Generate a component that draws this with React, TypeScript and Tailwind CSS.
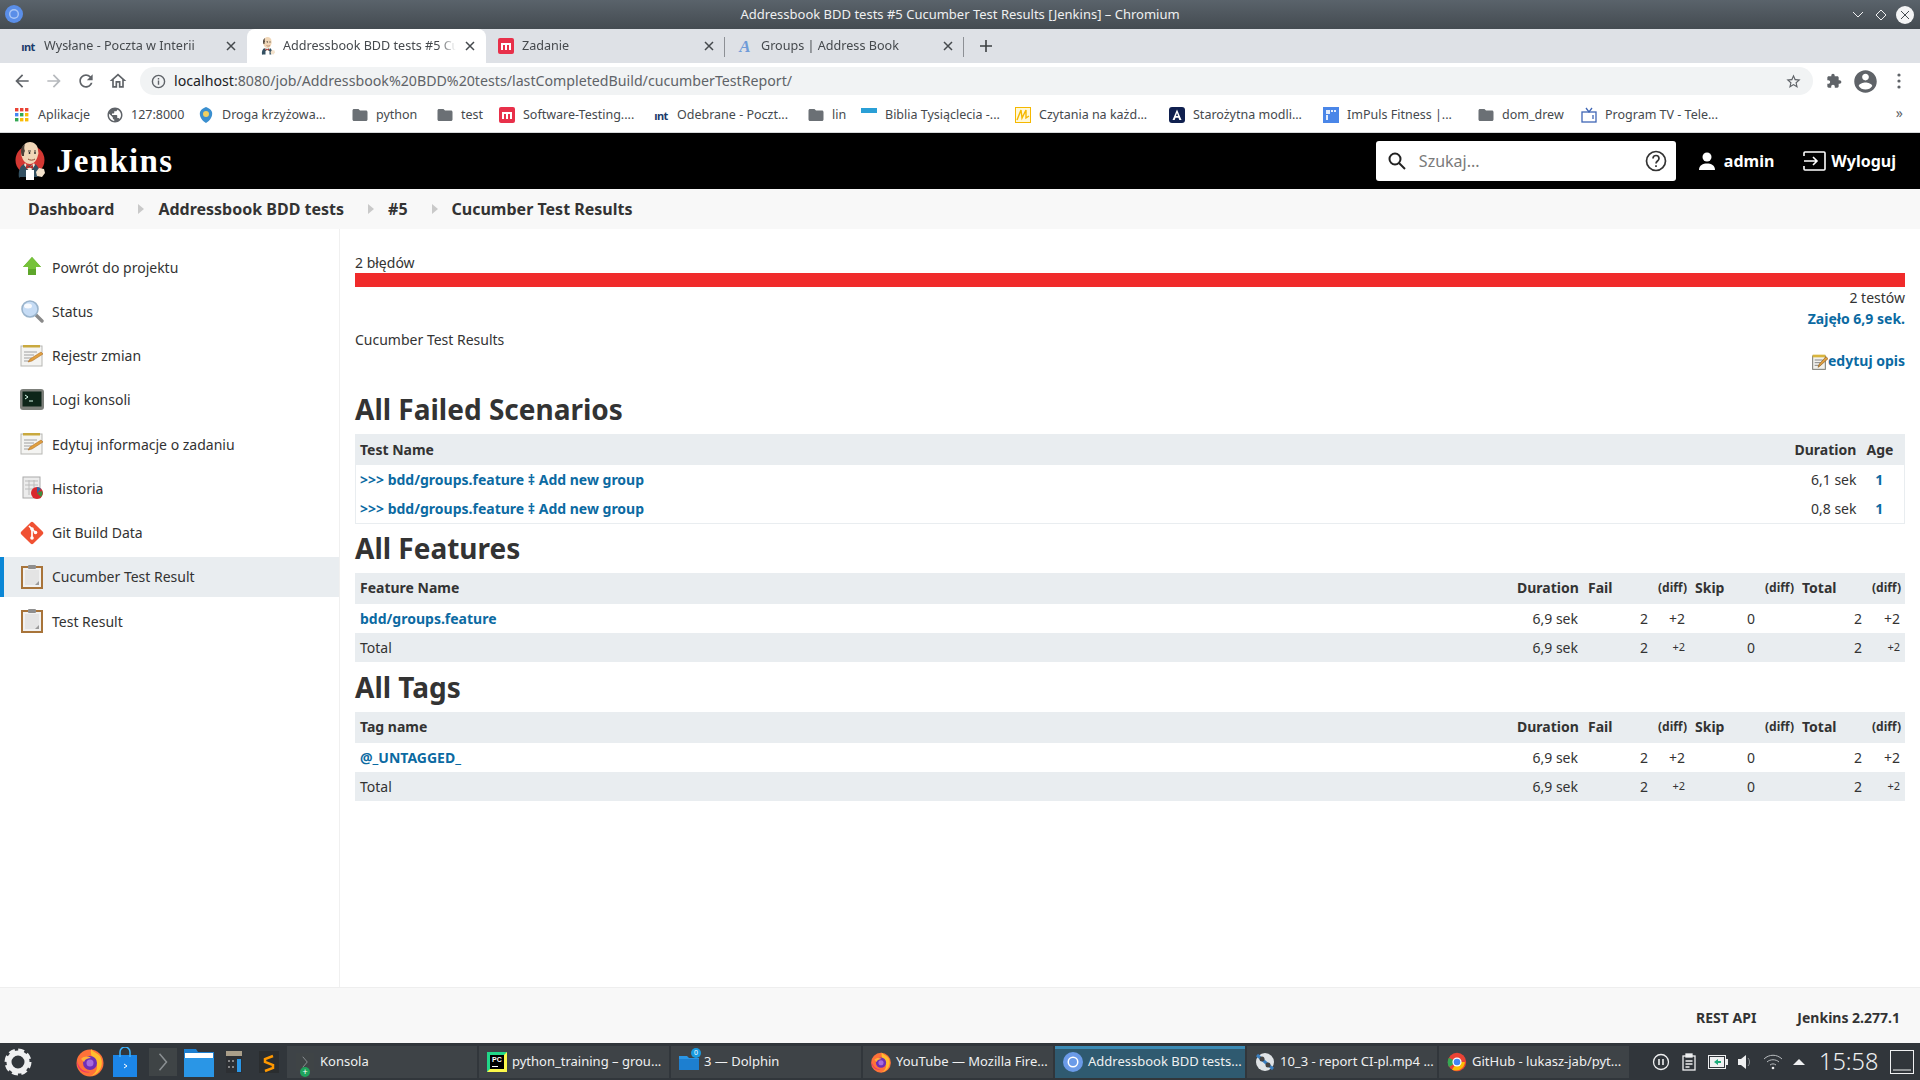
import React from "react";

const P = ({ d, c = "", s = 16, fill = "currentColor" }: { d: string; c?: string; s?: number; fill?: string }) => (
  <svg width={s} height={s} viewBox="0 0 24 24" className={"shrink-0 " + c} fill={fill}><path d={d} /></svg>
);
const FOLDER = "M10 4H4c-1.1 0-1.99.9-1.99 2L2 18c0 1.1.9 2 2 2h16c1.1 0 2-.9 2-2V8c0-1.1-.9-2-2-2h-8l-2-2z";
const GLOBE = "M12 2C6.48 2 2 6.48 2 12s4.48 10 10 10 10-4.48 10-10S17.52 2 12 2zm-1 17.93c-3.95-.49-7-3.85-7-7.93 0-.62.08-1.21.21-1.79L9 15v1c0 1.1.9 2 2 2v1.93zm6.9-2.54c-.26-.81-1-1.39-1.9-1.39h-1v-3c0-.55-.45-1-1-1H8v-2h2c.55 0 1-.45 1-1V7h2c1.1 0 2-.9 2-2v-.41c2.93 1.19 5 4.06 5 7.41 0 2.08-.8 3.97-2.1 5.39z";

const Jenkins = ({ w = 30, h = 38, ring = true }: { w?: number; h?: number; ring?: boolean }) => (
  <svg width={w} height={h} viewBox="0 0 30 38" className="shrink-0">
    {ring && <circle cx="15" cy="18" r="14.500" fill="#d33833" />}
    <path d="M4 36c-1-7 1-12 5-14l5 2 6-2c3 2 5 6 5 10l-3 3H5z" fill="#335061" />
    <path d="M10 21l4 5 5-5 1 2-5 7-6-7z" fill="#f3ead8" />
    <path d="M11 23l3.500 2 3.500-2v4l-3.500-1.500L11 27z" fill="#b5302c" />
    <path d="M7 9C7 3 11 0 15 0s8 3 8 8c0 2 1 3 0 5-1 5-4 9-8 9-4 0-7-3-8-7-1-1-1-4 0-6z" fill="#f0d6b7" />
    <path d="M7 14C5 9 6 4 10 2c-1 3-1 5 0 7-1 1-1 3-1 5z" fill="#4a4038" />
    <path d="M13 9h3M19 9h2" stroke="#4a4038" strokeWidth="1.200" />
    <circle cx="14.500" cy="11" r=".9" fill="#222" /><circle cx="20" cy="11" r=".9" fill="#222" />
    <path d="M13 17c2 1.500 5 1.500 7 0" stroke="#8a4a32" strokeWidth="1" fill="none" />
    <rect x="11" y="28" width="8" height="10" fill="#fff" />
    <path d="M21 30l3-4 5 1 1 4-3 4-5-1z" fill="#f3e2cc" />
  </svg>
);

const MIcon = () => (
  <svg width="16" height="16" viewBox="0 0 16 16" className="shrink-0"><rect width="16" height="16" rx="2" fill="#e8304a" /><path d="M3 12V5h10v7h-2V7H9v5H7V7H5v5z" fill="#fff" /></svg>
);
const IntIcon = () => (
  <span className="w-4 h-4 shrink-0 flex items-center justify-center text-[11px] leading-none font-bold text-[#1b3a6b] tracking-[-0.5px]">ınt</span>
);
const Close = () => (
  <svg width="10" height="10" viewBox="0 0 10 10" className="shrink-0" stroke="#45494d" strokeWidth="1.5"><path d="M1 1l8 8M9 1l-8 8" /></svg>
);

function Tab({ title, icon, active, sep }: { title: string; icon: React.ReactNode; active?: boolean; sep?: boolean }) {
  return (
    <div className={"w-[239px] h-[34px] shrink-0 flex items-center pl-3 pr-[10px] relative " + (active ? "bg-white rounded-t-lg" : "")}>
      <span className="w-4 h-4 flex items-center justify-center shrink-0">{icon}</span>
      <span className="ml-2 pt-[1px] flex-1 min-w-0 whitespace-nowrap overflow-hidden text-[12.6px] text-[#45494d] [mask-image:linear-gradient(to_right,black_90%,transparent)]">{title}</span>
      <span className="ml-2 w-3 flex justify-center"><Close /></span>
      {sep && <span className="absolute right-0 top-2 h-5 w-px bg-[#8d9095]" />}
    </div>
  );
}

const AppsGrid = () => (
  <svg width="14" height="14" viewBox="0 0 14 14" className="shrink-0">
    {[["#ea4335", "#ea4335", "#ea4335"], ["#4285f4", "#34a853", "#fbbc05"], ["#34a853", "#fbbc05", "#fbbc05"]].map((r, y) =>
      r.map((f, x) => <rect key={x + "" + y} x={x * 5} y={y * 5} width="3.4" height="3.4" fill={f} />)
    )}
  </svg>
);

function Bm({ icon, text, w }: { icon: React.ReactNode; text?: string; w: string }) {
  return (
    <div className={"flex items-center gap-2 shrink-0 whitespace-nowrap " + w}>
      <span className="w-4 h-4 flex items-center justify-center shrink-0">{icon}</span>
      <span className="text-[12.5px] text-[#45494d]">{text}</span>
    </div>
  );
}

function BrowserChrome() {
  return (
    <div className="shrink-0">
      <div className="h-[29px] relative flex items-center justify-center bg-linear-to-b from-[#5a636b] to-[#444b51] text-[#eff0f1] text-[13px]">
        <svg width="20" height="20" viewBox="0 0 20 20" className="absolute left-1 top-1"><circle cx="10" cy="10" r="9" fill="#5a8ee8" /><circle cx="10" cy="10" r="5" fill="#a9c6f5" /><circle cx="10" cy="10" r="3.600" fill="#5a8ee8" /></svg>
        Addressbook BDD tests #5 Cucumber Test Results [Jenkins] – Chromium
        <div className="absolute right-0 top-0 h-[29px] flex items-center">
          <svg width="12" height="8" viewBox="0 0 12 8" className="mr-[11px]" stroke="#eff0f1" fill="none"><path d="M1 1l5 5 5-5" /></svg>
          <svg width="12" height="12" viewBox="0 0 12 12" className="mr-[9px]" stroke="#eff0f1" fill="none"><path d="M6 1l5 5-5 5-5-5z" /></svg>
          <svg width="18" height="18" viewBox="0 0 18 18" className="mr-[6px]"><circle cx="9" cy="9" r="9" fill="#f3f4f5" /><path d="M5 5l8 8M13 5l-8 8" stroke="#444b51" strokeWidth="1" /></svg>
        </div>
      </div>
      <div className="h-[34px] bg-[#dee1e6] flex items-center pl-2">
        <Tab title="Wysłane - Poczta w Interii" icon={<IntIcon />} />
        <Tab title="Addressbook BDD tests #5 Cucumber Test Results" icon={<Jenkins w={15} h={19} ring={false} />} active />
        <Tab title="Zadanie" icon={<MIcon />} sep />
        <Tab title="Groups | Address Book" icon={<span className="font-['Liberation_Serif',serif] italic font-bold text-[17px] leading-none text-[#6f9bd8]">A</span>} sep />
        <svg width="14" height="14" viewBox="0 0 14 14" className="ml-[15px]" stroke="#3c4043" strokeWidth="1.6"><path d="M7 1v12M1 7h12" /></svg>
      </div>
      <div className="h-[32px] bg-white flex items-end pb-0">
        <div className="w-[140px] h-[28px] flex items-center text-[#5f6368]">
          <P d="M20 11H7.83l5.59-5.59L12 4l-8 8 8 8 1.41-1.41L7.83 13H20v-2z" s={20} c="ml-3" />
          <P d="M12 4l-1.41 1.41L16.17 11H4v2h12.17l-5.58 5.59L12 20l8-8z" s={20} c="ml-3 text-[#b6b9bd]" />
          <P d="M17.65 6.35C16.2 4.9 14.21 4 12 4c-4.42 0-7.99 3.58-7.99 8s3.57 8 7.99 8c3.73 0 6.84-2.55 7.73-6h-2.08c-.82 2.33-3.04 4-5.65 4-3.31 0-6-2.69-6-6s2.69-6 6-6c1.66 0 3.14.69 4.22 1.78L13 11h7V4l-2.35 2.35z" s={20} c="ml-3" />
          <P d="M12 5.69l5 4.5V18h-2v-6H9v6H7v-7.81l5-4.5M12 3L2 12h3v8h6v-6h2v6h6v-8h3L12 3z" s={20} c="ml-3" />
        </div>
        <div className="w-[1673px] h-[28px] rounded-full bg-[#f1f3f4] flex items-center pl-[11px] pr-[11px]">
          <svg width="15" height="15" viewBox="0 0 16 16" className="shrink-0" fill="none" stroke="#5f6368" strokeWidth="1.5"><circle cx="8" cy="8" r="6.5" /><path d="M8 7v4.5M8 4.2v1.6" /></svg>
          <span className="ml-[8px] text-[14.2px] leading-[24px] pb-[1px] text-[#5f6368] whitespace-nowrap"><span className="text-[#202124]">localhost</span>:8080/job/Addressbook%20BDD%20tests/lastCompletedBuild/cucumberTestReport/</span>
          <P d="M22 9.24l-7.19-.62L12 2 9.19 8.63 2 9.24l5.46 4.73L5.82 21 12 17.27 18.18 21l-1.63-7.03L22 9.24zM12 15.4l-3.76 2.27 1-4.28-3.32-2.88 4.38-.38L12 6.1l1.71 4.04 4.38.38-3.32 2.88 1 4.28L12 15.4z" s={17} c="ml-auto text-[#5f6368]" />
        </div>
        <div className="flex-1 h-[28px] flex items-center text-[#5f6368]">
          <P d="M20.5 11H19V7c0-1.1-.9-2-2-2h-4V3.5C13 2.12 11.88 1 10.5 1S8 2.12 8 3.5V5H4c-1.1 0-1.99.9-1.99 2v3.8H3.5c1.49 0 2.7 1.21 2.7 2.7s-1.21 2.7-2.7 2.7H2V20c0 1.1.9 2 2 2h3.8v-1.5c0-1.49 1.21-2.7 2.7-2.7 1.49 0 2.7 1.21 2.7 2.7V22H17c1.1 0 2-.9 2-2v-4h1.5c1.38 0 2.5-1.12 2.5-2.5S21.88 11 20.5 11z" s={16} c="ml-[13px]" />
          <P d="M12 2C6.48 2 2 6.48 2 12s4.48 10 10 10 10-4.48 10-10S17.52 2 12 2zm0 3c1.66 0 3 1.34 3 3s-1.34 3-3 3-3-1.34-3-3 1.34-3 3-3zm0 14.2c-2.5 0-4.71-1.28-6-3.22.03-1.99 4-3.08 6-3.08 1.99 0 5.97 1.09 6 3.08-1.29 1.94-3.5 3.22-6 3.22z" s={27} c="ml-[10px]" />
          <svg width="4" height="16" viewBox="0 0 4 16" className="ml-[18px]" fill="#5f6368"><circle cx="2" cy="2" r="1.6" /><circle cx="2" cy="8" r="1.6" /><circle cx="2" cy="14" r="1.6" /></svg>
        </div>
      </div>
      <div className="h-[38px] bg-white border-b border-[#d6d8da] flex items-center pl-[14px] pt-[3px] relative">
        <Bm w="w-[93px]" icon={<AppsGrid />} text="Aplikacje" />
        <Bm w="w-[91px]" icon={<P d={GLOBE} s={18} c="text-[#5f6368]" />} text="127:8000" />
        <Bm w="w-[154px]" icon={<svg width="16" height="16" viewBox="0 0 16 16"><path d="M8 0c2 1 5 2 6 5 1 4-2 9-6 11C4 14 1 9 2 5c1-3 4-4 6-5z" fill="#3a8fcf" /><circle cx="8" cy="7" r="3" fill="#f0d060" /></svg>} text="Droga krzyżowa..." />
        <Bm w="w-[85px]" icon={<P d={FOLDER} s={18} c="text-[#6b7075]" />} text="python" />
        <Bm w="w-[62px]" icon={<P d={FOLDER} s={18} c="text-[#6b7075]" />} text="test" />
        <Bm w="w-[154px]" icon={<MIcon />} text="Software-Testing...." />
        <Bm w="w-[155px]" icon={<IntIcon />} text="Odebrane - Poczt..." />
        <Bm w="w-[53px]" icon={<P d={FOLDER} s={18} c="text-[#6b7075]" />} text="lin" />
        <Bm w="w-[154px]" icon={<svg width="16" height="16" viewBox="0 0 16 16"><rect y="1" width="16" height="5" fill="#2a9fd6" /></svg>} text="Biblia Tysiąclecia -..." />
        <Bm w="w-[154px]" icon={<svg width="16" height="16" viewBox="0 0 16 16"><rect x=".5" y=".5" width="15" height="15" fill="#fff8d8" stroke="#f5b800" /><path d="M2 13L6 3l1 8 4-8 0 8 3-2" stroke="#f5b800" fill="none" strokeWidth="1.4" /></svg>} text="Czytania na każd..." />
        <Bm w="w-[154px]" icon={<svg width="16" height="16" viewBox="0 0 16 16"><rect width="16" height="16" rx="3" fill="#10204f" /><path d="M3.5 13L8 2.5 12.5 13h-2.2l-.8-2.2h-3L5.7 13zM7 9h2L8 6z" fill="#fff" /></svg>} text="Starożytna modli..." />
        <Bm w="w-[155px]" icon={<svg width="16" height="16" viewBox="0 0 16 16"><rect width="16" height="16" fill="#4a86e8" /><path d="M3 3h4v4H3zM8 3h2v2H8zM11 3h2v2h-2zM3 8h2v5H3z" fill="#fff" opacity=".85" /></svg>} text="ImPuls Fitness |..." />
        <Bm w="w-[103px]" icon={<P d={FOLDER} s={18} c="text-[#6b7075]" />} text="dom_drew" />
        <Bm w="w-[150px]" icon={<svg width="16" height="16" viewBox="0 0 16 16" fill="none" stroke="#3f66b5" strokeWidth="1.3"><rect x="1" y="5" width="14" height="10" /><path d="M5 1l3 4 3-4" /><path d="M12 8v4" /></svg>} text="Program TV - Tele..." />
        <span className="absolute right-[17px] top-[9px] text-[14px] leading-[18px] text-[#5f6368]">»</span>
      </div>
    </div>
  );
}

function JenkinsHeader() {
  return (
    <div className="h-[56px] bg-black shrink-0 flex items-center pr-[24px] text-white">
      <span className="ml-[15px] flex"><Jenkins /></span>
      <span className="ml-[11px] font-['Liberation_Serif',serif] font-bold text-[33px] leading-none tracking-[1.3px]">Jenkins</span>
      <div className="ml-auto w-[300px] h-[40px] bg-white rounded-[3px] flex items-center pl-[11px] pr-[9px]">
        <svg width="20" height="20" viewBox="0 0 20 20" fill="none" stroke="#222" strokeWidth="2"><circle cx="8" cy="8" r="5.5" /><path d="M12 12l6 6" /></svg>
        <span className="ml-[12px] text-[16px] text-[#7a7a7a]">Szukaj...</span>
        <svg width="22" height="22" viewBox="0 0 22 22" className="ml-auto" fill="none" stroke="#333" strokeWidth="1.7"><circle cx="11" cy="11" r="9.5" /><path d="M8 8.5c0-4 6-4 6 0 0 2.5-3 2.5-3 5M11 15.2v1.8" /></svg>
      </div>
      <svg width="20" height="20" viewBox="0 0 20 20" fill="#fff" className="ml-[21px]"><circle cx="10" cy="6" r="4.5" /><path d="M2 19c0-5 4-6.500 8-6.500s8 1.500 8 6.500z" /></svg>
      <span className="ml-[7px] font-bold text-[16px]">admin</span>
      <svg width="23" height="20" viewBox="0 0 23 20" fill="none" stroke="#fff" strokeWidth="1.6" className="ml-[29px]"><path d="M1 5V2a1 1 0 011-1h19a1 1 0 011 1v16a1 1 0 01-1 1H2a1 1 0 01-1-1v-3" /><path d="M1 10h13M10 6l4 4-4 4" /></svg>
      <span className="ml-[5px] font-bold text-[16px]">Wyloguj</span>
    </div>
  );
}

const Chev = () => <svg width="6" height="10" viewBox="0 0 6 10" className="shrink-0 ml-[24px] mr-[14px]"><path d="M0 0l6 5-6 5z" fill="#c9c9c9" /></svg>;

function Breadcrumb() {
  return (
    <div className="h-[40px] bg-[#f8f8f8] shrink-0 flex items-center pl-[28px] font-bold text-[16px] text-[#333]">
      <span>Dashboard</span><Chev /><span>Addressbook BDD tests</span><Chev /><span>#5</span><Chev /><span>Cucumber Test Results</span>
    </div>
  );
}

const Clipboard = () => (
  <svg width="22" height="24" viewBox="0 0 22 24">
    <rect x="1" y="2" width="20" height="21" fill="#f1f1f1" stroke="#a8743a" strokeWidth="2" />
    <rect x="4" y="5" width="14" height="15" fill="#e4e4e4" />
    <path d="M14 20l4-4v4z" fill="#9a9a9a" />
    <rect x="7" y="0" width="8" height="4" rx="1" fill="#8f8f8f" />
  </svg>
);
const Notepad = () => (
  <svg width="24" height="24" viewBox="0 0 24 24">
    <rect x="1" y="2" width="21" height="20" fill="#f4f4f2" stroke="#b8b8b4" />
    <rect x="3" y="1" width="17" height="2.500" fill="#c9a93f" />
    <path d="M4 8h13M4 11h10M4 14h8M4 17h6" stroke="#a0a0a0" strokeWidth="1" />
    <path d="M8 18l2-3L21 8l2 2-11 7z" fill="#e0a040" stroke="#a9651d" strokeWidth=".5" />
  </svg>
);

const items: [string, React.ReactNode][] = [
  ["Powrót do projektu", <svg width="24" height="24" viewBox="0 0 24 24"><path d="M12 2l9 10h-5v8H8v-8H3z" fill="#5ea62b" /><path d="M12 2l9 10h-5v2H8v-2H3z" fill="#76c23a" /></svg>],
  ["Status", <svg width="24" height="24" viewBox="0 0 24 24"><path d="M15 15l7 7" stroke="#8a8a8a" strokeWidth="3.4" strokeLinecap="round" /><circle cx="10" cy="10" r="8" fill="#c6dcf5" stroke="#9ab4cc" strokeWidth="1.6" /><ellipse cx="8" cy="7" rx="4" ry="2.500" fill="#fff" opacity=".85" /></svg>],
  ["Rejestr zmian", <Notepad />],
  ["Logi konsoli", <svg width="24" height="24" viewBox="0 0 24 24"><rect x="0" y="1" width="24" height="21" rx="3" fill="#7c7f7a" /><rect x="2.500" y="3.500" width="19" height="15" fill="#0d2519" /><path d="M5 7l3 2-3 2M9 13h4" stroke="#dfe" strokeWidth="1" fill="none" /></svg>],
  ["Edytuj informacje o zadaniu", <Notepad />],
  ["Historia", <svg width="24" height="24" viewBox="0 0 24 24"><rect x="3" y="1" width="17" height="21" fill="#ececec" stroke="#aaa" /><path d="M5 5h13M5 9h13M5 13h13M9 4v15M14 4v15" stroke="#bcbcbc" /><circle cx="17" cy="17" r="6" fill="#d8262c" /><path d="M17 17l5-2a6 6 0 01-1 6z" fill="#3f8f3f" /><path d="M17 17v-6a6 6 0 014 2z" fill="#3465a4" /></svg>],
  ["Git Build Data", <svg width="24" height="24" viewBox="0 0 24 24"><rect x="3.500" y="3.500" width="17" height="17" rx="2" transform="rotate(45 12 12)" fill="#f05133" /><path d="M9 5l6 6M12 8v9" stroke="#fff" strokeWidth="1.700" /><circle cx="12" cy="8" r="1.800" fill="#fff" /><circle cx="15.500" cy="11.500" r="1.800" fill="#fff" /><circle cx="12" cy="17" r="1.800" fill="#fff" /></svg>],
  ["Cucumber Test Result", <Clipboard />],
  ["Test Result", <Clipboard />],
];

function Sidebar() {
  return (
    <div className="w-[340px] shrink-0 border-r border-[#f0f0f0] pt-[18px]">
      {items.map(([t, ic], i) => (
        <div key={t} className={"h-[40.25px] mb-[4px] flex items-center text-[14px] text-[#333] border-l-4 " + (i === 7 ? "bg-[#e9edf0] border-[#0b87d6]" : "border-transparent")}>
          <span className="w-[24px] h-[24px] ml-[16px] flex items-center justify-center shrink-0">{ic}</span>
          <span className="ml-[8px]">{t}</span>
        </div>
      ))}
    </div>
  );
}

const th = "px-[5px] h-[31px] font-bold text-left text-[14px] text-[#333] pb-[1px]";
const dh = "px-[5px] h-[31px] font-bold text-right text-[12px] text-[#333] pb-[1px]";
const td = "px-[5px] h-[29px] text-right text-[14px] text-[#333]";
const tdName = "px-[5px] h-[29px] text-left text-[14px] text-[#333]";
const tdSmall = "px-[5px] h-[29px] text-right text-[11px] text-[#333]";
const link = "font-bold text-[#0b6aa2]";

function StatsTable({ head, name }: { head: string; name: string }) {
  return (
    <table className="w-full table-fixed">
      <colgroup>
        <col /><col className="w-[71px]" /><col className="w-[70px]" /><col className="w-[37px]" /><col className="w-[70px]" /><col className="w-[37px]" /><col className="w-[70px]" /><col className="w-[38px]" />
      </colgroup>
      <thead>
        <tr className="bg-[#e9edf0]">
          <th className={th}>{head}</th><th className={th}>Duration</th><th className={th}>Fail</th><th className={dh}>(diff)</th><th className={th}>Skip</th><th className={dh}>(diff)</th><th className={th}>Total</th><th className={dh}>(diff)</th>
        </tr>
      </thead>
      <tbody>
        <tr>
          <td className={tdName}><span className={link}>{name}</span></td>
          <td className={td}>6,9 sek</td><td className={td}>2</td><td className={td}>+2</td><td className={td}>0</td><td className={td}></td><td className={td}>2</td><td className={td}>+2</td>
        </tr>
        <tr className="bg-[#e9edf0]">
          <td className={tdName}>Total</td>
          <td className={td}>6,9 sek</td><td className={td}>2</td><td className={tdSmall}>+2</td><td className={td}>0</td><td className={td}></td><td className={td}>2</td><td className={tdSmall}>+2</td>
        </tr>
      </tbody>
    </table>
  );
}

const H = ({ children }: { children: React.ReactNode }) => (
  <h1 className="h-[50px] flex items-center text-[28px] font-bold text-[#333]">{children}</h1>
);

function Main() {
  return (
    <div className="flex-1 min-w-0 pl-[15px] pr-[15px] pt-[23px] text-[14px] text-[#333]">
      <div className="h-[21px] leading-[22px]">2 błędów</div>
      <div className="h-[14px] bg-[#f02b2b]" />
      <div className="h-[21px] leading-[21px] text-right">2 testów</div>
      <div className="h-[21px] leading-[21px] text-right"><span className={link}>Zajęło 6,9 sek.</span></div>
      <div className="h-[21px] leading-[21px]">Cucumber Test Results</div>
      <div className="h-[21px] leading-[21px] flex justify-end items-center">
        <svg width="16" height="16" viewBox="0 0 24 24" className="mt-[3px]"><rect x="1" y="3" width="19" height="20" fill="#f2f2ee" stroke="#777770" strokeWidth="1.500" /><rect x="1" y="1" width="19" height="4" fill="#d9b53e" /><path d="M4 9h12M4 13h9M4 17h7" stroke="#888" strokeWidth="1.500" /><path d="M9 20l2-5L21 4l3 3-12 11z" fill="#e0a040" stroke="#8a5a1e" /></svg>
        <span className={link}>edytuj opis</span>
      </div>
      <div className="h-[13px]" />
      <H>All Failed Scenarios</H>
      <table className="w-full table-fixed border-x border-b border-[#e9edf0] mb-[-1px]">
        <colgroup><col /><col className="w-[72px]" /><col className="w-[43px]" /></colgroup>
        <thead><tr className="bg-[#e9edf0]"><th className={th + " pl-[4px]"}>Test Name</th><th className={th}>Duration</th><th className={th}>Age</th></tr></thead>
        <tbody>
          {["6,1 sek", "0,8 sek"].map((d) => (
            <tr key={d}>
              <td className={tdName + " pl-[4px]"}><span className={link}>&gt;&gt;&gt; bdd/groups.feature ‡ Add new group</span></td>
              <td className={td}>{d}</td>
              <td className="h-[29px] pr-[7px] text-center text-[14px]"><span className={link}>1</span></td>
            </tr>
          ))}
        </tbody>
      </table>
      <H>All Features</H>
      <StatsTable head="Feature Name" name="bdd/groups.feature" />
      <H>All Tags</H>
      <StatsTable head="Tag name" name="@_UNTAGGED_" />
    </div>
  );
}

const Firefox = ({ s = 30 }: { s?: number }) => (
  <svg width={s} height={s} viewBox="0 0 30 30" className="shrink-0">
    <circle cx="15" cy="16" r="13.500" fill="#ff7139" />
    <path d="M16 2c3 4 8 4 10 9 3 8-2 17-11 18 7-2 9-10 5-15-2-3-5-5-4-12z" fill="#ffbd2e" />
    <path d="M2 14c2 8 7 11 13 11-6 2-13-2-13-11z" fill="#e31587" opacity=".7" />
    <circle cx="15" cy="16" r="7" fill="#6e2fb5" />
    <circle cx="15" cy="16" r="3.500" fill="#a66bdc" />
    <path d="M6 12c3-3 7-3 10-1-3 0-6 1-7 4z" fill="#ffb03a" />
  </svg>
);
const ChromeI = ({ s = 22 }: { s?: number }) => (
  <svg width={s} height={s} viewBox="0 0 22 22" className="shrink-0"><circle cx="11" cy="11" r="10" fill="#6b9be8" /><circle cx="11" cy="11" r="5.500" fill="#fff" /><circle cx="11" cy="11" r="4" fill="#6b9be8" /></svg>
);
const KonsoleI = ({ s = 24 }: { s?: number }) => (
  <svg width={s} height={s} viewBox="0 0 24 24" className="shrink-0"><rect width="24" height="24" fill="#3f4446" /><path d="M9 5l6 7-6 7" stroke="#8a8f92" strokeWidth="1.300" fill="none" /></svg>
);

function Task({ icon, text, active }: { icon: React.ReactNode; text: string; active?: boolean }) {
  return (
    <div className={"w-[190px] h-[32px] shrink-0 flex items-center pl-[6px] whitespace-nowrap text-[13px] text-[#eff0f1] " + (active ? "bg-[#2f5a70] border-t-[3px] border-[#3b8bb5] pb-[3px]" : "bg-[#3e4347]")}>
      <span className="w-[24px] h-[24px] flex items-center justify-center shrink-0 relative">{icon}</span>
      <span className="ml-[3px]">{text}</span>
    </div>
  );
}

function Taskbar() {
  return (
    <div className="h-[37px] bg-[#31363b] shrink-0 flex items-center pt-[1px]">
      <div className="w-[287px] shrink-0 flex items-center">
        <svg width="28" height="28" viewBox="0 0 28 28" className="ml-[4px] shrink-0">
          <circle cx="14" cy="14" r="9" fill="none" stroke="#eff0f1" strokeWidth="5" />
          <circle cx="14" cy="14" r="12" fill="none" stroke="#eff0f1" strokeWidth="3" strokeDasharray="6 3.4" />
        </svg>
        <span className="ml-[43px] flex"><Firefox /></span>
        <svg width="24" height="30" viewBox="0 0 24 30" className="ml-[8px] shrink-0"><path d="M0 8h24v22H0z" fill="#1c86e8" /><path d="M7 10V5a5 5 0 0110 0v5" stroke="#3db5ff" fill="none" strokeWidth="1.500" /><path d="M11 17l3 2-3 2" stroke="#fff" fill="none" /></svg>
        <span className="ml-[12px] flex"><KonsoleI s={28} /></span>
        <svg width="30" height="30" viewBox="0 0 30 30" className="ml-[7px] shrink-0"><path d="M0 2h12l2 3h16v25H0z" fill="#1d7fd0" /><rect x="1" y="6" width="28" height="5" fill="#fff" /><rect y="11" width="30" height="19" fill="#2a96e6" /></svg>
        <svg width="16" height="22" viewBox="0 0 16 22" className="ml-[12px] shrink-0"><rect width="16" height="5" fill="#aa9f8a" /><rect y="5" width="16" height="17" fill="#2c2f33" /><rect x="11" y="8" width="4" height="13" fill="#2a96e6" /><path d="M2 10h2M6 10h2M2 16h2M6 16h2" stroke="#ddd" /></svg>
        <svg width="20" height="22" viewBox="0 0 20 22" className="ml-[17px] shrink-0"><rect width="20" height="22" fill="#2a2d2f" /><path d="M14 5L6 8v3l8 3v3l-8 3" stroke="#ff9800" strokeWidth="2.500" fill="none" /></svg>
      </div>
      <div className="flex gap-[2px]">
        <Task icon={<><KonsoleI s={18} /><span className="absolute left-[7px] bottom-[-3px] w-[10px] h-[10px] rounded-full bg-[#1fa35c] text-white text-[9px] leading-[10px] text-center">+</span></>} text="Konsola" />
        <Task icon={<svg width="20" height="20" viewBox="0 0 20 20"><rect width="20" height="20" fill="#21d789" /><path d="M0 20L20 0v20z" fill="#fcf84a" /><rect x="3" y="3" width="14" height="14" fill="#000" /><rect x="5" y="14" width="6" height="1" fill="#fff" /><text x="5" y="10" fontSize="7" fontWeight="700" fill="#fff" fontFamily="Liberation Sans">PC</text></svg>} text="python_training – grou..." />
        <Task icon={<><svg width="20" height="16" viewBox="0 0 20 16"><path d="M0 2h8l2 2h10v12H0z" fill="#2a96e6" /><rect y="5" width="20" height="11" fill="#1d7fd0" /></svg><span className="absolute right-[0px] top-[-2px] w-[10px] h-[10px] rounded-full bg-[#1a9be0] text-white text-[7px] leading-[10px] text-center">0</span></>} text="3 — Dolphin" />
        <Task icon={<Firefox s={22} />} text="YouTube — Mozilla Fire..." />
        <Task icon={<ChromeI />} text="Addressbook BDD tests..." active />
        <Task icon={<svg width="20" height="22" viewBox="0 0 20 22"><circle cx="10" cy="11" r="9" fill="#dfe3e6" /><path d="M2 4l16 14" stroke="#3a7fc0" strokeWidth="3" /><circle cx="7" cy="8" r="2.500" fill="#444" /><circle cx="13" cy="14" r="2.500" fill="#444" /></svg>} text="10_3 - report CI-pl.mp4 ..." />
        <Task icon={<svg width="20" height="20" viewBox="0 0 24 24"><circle cx="12" cy="12" r="11" fill="#ea4335" /><path d="M12 12L2.500 18a11 11 0 0 1-.2-11z" fill="#34a853" /><path d="M12 12l9.500 0A11 11 0 0 1 6 21.300z" fill="#fbbc05" /><circle cx="12" cy="12" r="5.500" fill="#fff" /><circle cx="12" cy="12" r="4" fill="#4285f4" /></svg>} text="GitHub - lukasz-jab/pyt..." />
      </div>
      <div className="ml-[23px] flex items-center">
        <svg width="18" height="18" viewBox="0 0 18 18" fill="none" stroke="#eff0f1" strokeWidth="1.300"><circle cx="9" cy="9" r="7.500" /><path d="M7 6v6M11 6v6" strokeWidth="1.600" /></svg>
        <svg width="14" height="18" viewBox="0 0 14 18" fill="none" stroke="#eff0f1" strokeWidth="1.300" className="ml-[12px]"><rect x="1" y="3" width="12" height="14" /><rect x="4" y="1" width="6" height="3" fill="#eff0f1" /><path d="M3.500 8h7M3.500 11h7M3.500 14h4" /></svg>
        <svg width="20" height="14" viewBox="0 0 20 14" className="ml-[12px]"><rect x=".5" y=".5" width="17" height="13" fill="none" stroke="#eff0f1" /><rect x="2" y="2" width="14" height="10" fill="#eff0f1" /><rect x="18" y="4" width="2" height="6" fill="#eff0f1" /><path d="M6 7l4-3v2h3v2h-3v2z" fill="#1cab7a" /></svg>
        <svg width="18" height="18" viewBox="0 0 18 18" className="ml-[8px]"><path d="M2 6h3l5-4v14l-5-4H2z" fill="#eff0f1" /><path d="M12 5c2 2 2 6 0 8" fill="none" stroke="#8a8f92" /></svg>
        <svg width="20" height="16" viewBox="0 0 20 16" fill="none" stroke="#b8bcbf" className="ml-[9px]"><path d="M1 5c5-5 13-5 18 0M4 8c3-3 9-3 12 0M7 11c2-1.500 4-1.500 6 0" /><circle cx="10" cy="14" r="1.300" fill="#eff0f1" stroke="none" /></svg>
        <svg width="12" height="6" viewBox="0 0 12 6" className="ml-[10px]"><path d="M6 0l6 6H0z" fill="#eff0f1" /></svg>
        <span className="ml-[14px] text-[23.5px] font-light leading-none text-[#eff0f1]">15:58</span>
        <svg width="24" height="24" viewBox="0 0 24 24" fill="none" className="ml-[12px]"><rect x=".5" y=".5" width="23" height="23" stroke="#eff0f1" /><path d="M3 20h18" stroke="#eff0f1" /></svg>
      </div>
    </div>
  );
}

export default function App() {
  return (
    <div className="w-[1920px] h-[1080px] overflow-hidden flex flex-col bg-white font-['Noto_Sans',sans-serif]">
      <BrowserChrome />
      <JenkinsHeader />
      <Breadcrumb />
      <div className="flex-1 min-h-0 flex">
        <Sidebar />
        <Main />
      </div>
      <div className="h-[56px] shrink-0 bg-[#f8f8f8] border-t border-[#eeeeee] flex items-center justify-end pr-[20px] pt-[3px] font-bold text-[14px] text-[#333]">
        <span>REST API</span>
        <span className="ml-[41px]">Jenkins 2.277.1</span>
      </div>
      <Taskbar />
    </div>
  );
}
